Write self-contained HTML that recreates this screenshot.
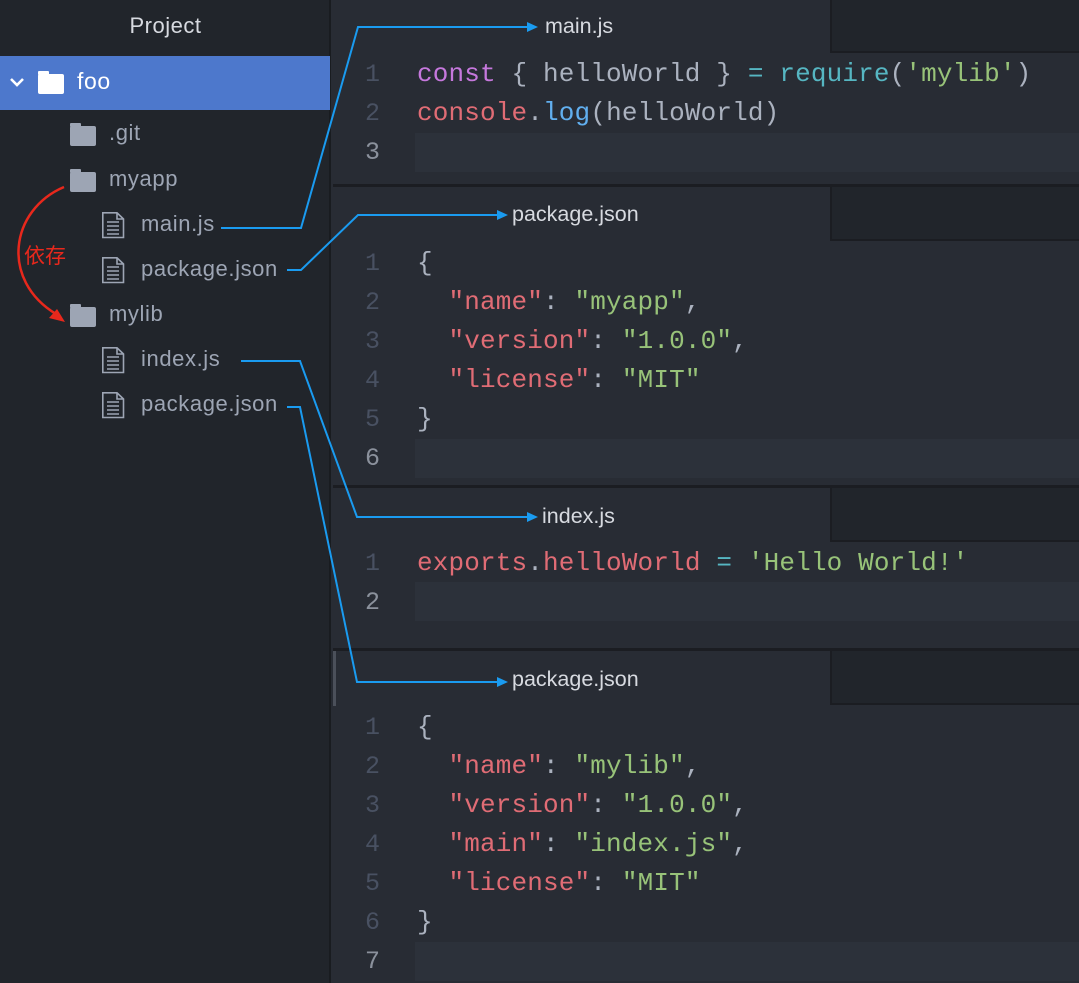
<!DOCTYPE html>
<html><head><meta charset="utf-8"><style>
*{margin:0;padding:0;box-sizing:border-box}
body{width:1079px;height:983px;background:#282c34;position:relative;overflow:hidden;font-family:"Liberation Sans","Noto Sans CJK SC",sans-serif}
.a{position:absolute}
#side{left:0;top:0;width:331px;height:983px;background:#21252b;border-right:2px solid #191c20}
.row{position:absolute;font-size:22px;letter-spacing:0.6px;color:#9da5b4;line-height:30px;white-space:nowrap}
.fold{position:absolute;width:26px;height:20px;background:#9da5b4;border-radius:2px}
.fold:before{content:"";position:absolute;left:0;top:-3px;width:11px;height:4px;background:inherit;border-radius:1px}
.code{position:absolute;font-family:"Liberation Mono","DejaVu Sans Mono",monospace;font-size:26px;line-height:39px;color:#abb2bf;white-space:pre;left:417px;letter-spacing:0.15px}
.ln{position:absolute;font-family:"Liberation Mono",monospace;font-size:25px;line-height:39px;color:#495162;left:356px;width:24px;text-align:right}
.hl{position:absolute;left:415px;right:0;height:39px;background:#2c313a}
.div{position:absolute;left:333px;right:0;height:3px;background:#1b1d22}
.tab{position:absolute;left:830px;right:0;height:56px;background:#21252b;border:2px solid #1b1d22;border-right:none}
.lbl{position:absolute;font-size:21.5px;color:#d7dae0}
.k{color:#c678dd}.r{color:#e06c75}.c{color:#56b6c2}.b{color:#61afef}.g{color:#98c379}
</style></head><body>
<div id="side" class="a"></div>
<div class="a" style="left:0;top:13px;width:331px;text-align:center;font-size:22px;letter-spacing:0.5px;color:#d7dae0">Project</div>
<div class="a" style="left:0;top:56px;width:330px;height:54px;background:#4d78cc"></div>
<svg class="a" style="left:9px;top:76px" width="16" height="12"><path d="M2 3 L8 9 L14 3" stroke="#fff" stroke-width="2.6" fill="none"/></svg>
<div class="fold" style="left:38px;top:74px;background:#fff"></div>
<div class="row" style="left:77px;top:66px;color:#fff;font-size:23px">foo</div>

<div class="fold" style="left:70px;top:126px"></div><div class="row" style="left:109px;top:118px">.git</div>
<div class="fold" style="left:70px;top:172px"></div><div class="row" style="left:109px;top:164px">myapp</div>
<div class="fold" style="left:70px;top:307px"></div><div class="row" style="left:109px;top:299px">mylib</div>

<svg class="a" style="left:0;top:0" width="331" height="983">
<g fill="none" stroke="#9da5b4" stroke-width="1.6">
<g id="f"><path d="M102.8 212.8 H117 L123.5 219 V237.5 H102.8 Z M117 212.8 V219 H123.5"/><path d="M107 222 H119 M107 226 H119 M107 230 H119 M107 234 H119"/></g>
<use href="#f" y="45"/><use href="#f" y="135"/><use href="#f" y="180"/>
</g>
<path d="M64 187 C10 210 0 280 56 314" stroke="#e8281c" stroke-width="2.5" fill="none"/>
<path d="M65 322 L49 318 L57 309 Z" fill="#e8281c"/>
</svg>
<div class="row" style="left:141px;top:209px">main.js</div>
<div class="row" style="left:141px;top:254px">package.json</div>
<div class="row" style="left:141px;top:344px">index.js</div>
<div class="row" style="left:141px;top:389px">package.json</div>
<div class="a" style="left:24px;top:240px;font-size:21px;color:#e8281c;font-family:'Noto Sans CJK SC',sans-serif">依存</div>

<div class="tab" style="top:-2px;height:55px"></div>
<div class="div" style="top:184px"></div>
<div class="tab" style="top:185px"></div>
<div class="div" style="top:485px"></div>
<div class="tab" style="top:486px"></div>
<div class="div" style="top:648px"></div>
<div class="tab" style="top:649px"></div>
<div class="a" style="left:333px;top:651px;width:3px;height:55px;background:#4b505a"></div>

<div class="lbl" style="left:545px;top:14px">main.js</div>
<div class="lbl" style="left:512px;top:202px">package.json</div>
<div class="lbl" style="left:542px;top:504px">index.js</div>
<div class="lbl" style="left:512px;top:667px">package.json</div>

<div class="hl" style="top:133px"></div>
<div class="hl" style="top:439px"></div>
<div class="hl" style="top:582px"></div>
<div class="hl" style="top:942px"></div>

<div class="ln" style="top:55px">1<br>2<br><span style="color:#8b919c">3</span></div>
<div class="code" style="top:55px"><span class="k">const</span> { helloWorld } <span class="c">=</span> <span class="c">require</span>(<span class="g">'mylib'</span>)
<span class="r">console</span>.<span class="b">log</span>(helloWorld)</div>

<div class="ln" style="top:244px">1<br>2<br>3<br>4<br>5<br><span style="color:#8b919c">6</span></div>
<div class="code" style="top:244px">{
  <span class="r">"name"</span>: <span class="g">"myapp"</span>,
  <span class="r">"version"</span>: <span class="g">"1.0.0"</span>,
  <span class="r">"license"</span>: <span class="g">"MIT"</span>
}</div>

<div class="ln" style="top:544px">1<br><span style="color:#8b919c">2</span></div>
<div class="code" style="top:544px"><span class="r">exports</span>.<span class="r">helloWorld</span> <span class="c">=</span> <span class="g">'Hello World!'</span></div>

<div class="ln" style="top:708px">1<br>2<br>3<br>4<br>5<br>6<br><span style="color:#8b919c">7</span></div>
<div class="code" style="top:708px">{
  <span class="r">"name"</span>: <span class="g">"mylib"</span>,
  <span class="r">"version"</span>: <span class="g">"1.0.0"</span>,
  <span class="r">"main"</span>: <span class="g">"index.js"</span>,
  <span class="r">"license"</span>: <span class="g">"MIT"</span>
}</div>

<svg class="a" style="left:0;top:0" width="1079" height="983">
<g fill="none" stroke="#1a9bf0" stroke-width="2">
<path d="M221 228 H301 L358 27 H530"/>
<path d="M287 270 H301 L358 215 H500"/>
<path d="M241 361 H300 L357 517 H530"/>
<path d="M287 407 H300 L357 682 H500"/>
</g>
<g fill="#1a9bf0">
<path d="M538 27 L527 22 L527 32 Z"/>
<path d="M508 215 L497 210 L497 220 Z"/>
<path d="M538 517 L527 512 L527 522 Z"/>
<path d="M508 682 L497 677 L497 687 Z"/>
</g>
</svg>
</body></html>
